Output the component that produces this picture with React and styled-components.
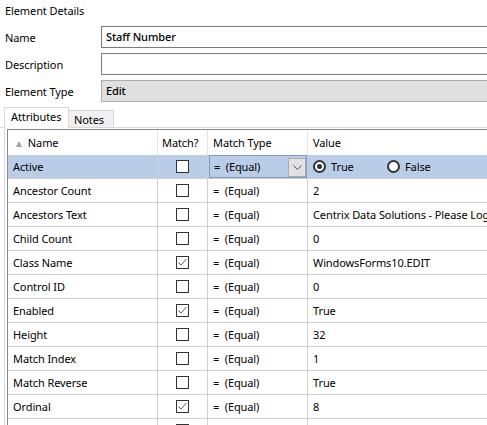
import React from 'react';
import styled, { createGlobalStyle } from 'styled-components';

const Global = createGlobalStyle`
  html, body { margin: 0; padding: 0; background: #fff; }
  body {
    font-family: "Segoe UI", "Noto Sans", "Open Sans", sans-serif;
    font-size: 11px;
    letter-spacing: -0.1px;
    color: #000;
  }
  * { box-sizing: border-box; }
`;

const Page = styled.div`
  width: 487px;
  height: 425px;
  overflow: hidden;
  display: flex;
  flex-direction: column;
`;

const Title = styled.div`
  height: 26px;
  line-height: 22px;
  padding-left: 5px;
`;

const Form = styled.div`
  display: grid;
  grid-template-columns: 101px 1fr;
  grid-auto-rows: 22px;
  row-gap: 5px;
  align-items: center;
`;

const Label = styled.div`
  padding-left: 5px;
`;

const Field = styled.div`
  height: 22px;
  border: 1px solid ${p => (p.$readOnly ? '#adadad' : '#7a7a7a')};
  border-right: none;
  background: ${p => (p.$readOnly ? '#e0e0e0' : '#fff')};
  padding-left: 4px;
  line-height: 19px;
  font-weight: 500;
`;

const TabStrip = styled.div`
  margin-top: 5px;
  height: 21px;
  display: flex;
  align-items: flex-end;
  padding-left: 4px;
  border-bottom: 1px solid #d9d9d9;
`;

const Tab = styled.div`
  height: ${p => (p.$active ? '21px' : '17px')};
  width: ${p => p.$w}px;
  margin-bottom: ${p => (p.$active ? '-1px' : '0')};
  background: ${p => (p.$active ? '#fff' : '#f0f0f0')};
  border: 1px solid #d9d9d9;
  border-bottom: none;
  border-left: ${p => (p.$active ? '1px solid #d9d9d9' : 'none')};
  padding-left: ${p => (p.$active ? '6px' : '5px')};
  line-height: 17px;
  position: relative;
  z-index: 1;
`;

const Panel = styled.div`
  flex: 1;
  margin-left: 4px;
  border-left: 1px solid #d9d9d9;
  padding: 1px 0 0 2px;
  overflow: hidden;
`;

const Grid = styled.div`
  width: 600px;
  border-left: 1px solid #828790;
  border-top: 1px solid #828790;
`;

const Row = styled.div`
  display: grid;
  grid-template-columns: 150px 50px 100px 1fr;
  height: ${p => (p.$header ? '25px' : '24px')};
  border-bottom: ${p => (p.$header ? 'none' : '1px solid #cfcfcf')};
  background: ${p => (p.$selected ? '#b9cde8' : '#fff')};
`;

const Cell = styled.div`
  display: flex;
  align-items: center;
  padding-left: ${p => p.$pad ?? 5}px;
  justify-content: ${p => (p.$center ? 'center' : 'flex-start')};
  border-right: 1px solid ${p => (p.$header ? '#e3e3e3' : '#cfcfcf')};
  white-space: pre;
  overflow: hidden;
  position: relative;
`;

const SortArrow = styled.span`
  color: #a0a0a0;
  font-size: 10px;
  margin-right: 4px;
  margin-left: 1px;
`;

const Box = styled.span`
  width: 13px;
  height: 13px;
  border: 1px solid #333;
  background: #fff;
  display: inline-flex;
  align-items: center;
  justify-content: center;
`;

const Combo = styled.div`
  position: absolute;
  left: 1px;
  top: 0;
  right: 0;
  bottom: 0;
  border: 1px solid #7b9cc9;
  display: flex;
  align-items: center;
  padding-left: 4px;
  white-space: pre;
`;

const ComboButton = styled.span`
  position: absolute;
  right: 0;
  top: 2px;
  width: 18px;
  height: 19px;
  background: #e1e1e1;
  border: 1px solid #adadad;
  display: flex;
  align-items: center;
  justify-content: center;
`;

const RadioGroup = styled.div`
  display: flex;
  align-items: center;
`;

const RadioOption = styled.span`
  display: inline-flex;
  align-items: center;
  min-width: ${p => p.$w || 0}px;
  gap: 5px;
`;

const RadioCircle = styled.span`
  width: 13px;
  height: 13px;
  border-radius: 50%;
  border: 2px solid #333;
  background: #fff;
  display: inline-flex;
  align-items: center;
  justify-content: center;
  &::after {
    content: '';
    width: 5px;
    height: 5px;
    border-radius: 50%;
    background: ${p => (p.$on ? '#333' : 'transparent')};
  }
`;

const Check = () => (
  <svg width="11" height="11" viewBox="0 0 11 11">
    <polyline points="1.5,5.5 4,8 9.5,2" fill="none" stroke="#555" strokeWidth="1" />
  </svg>
);

const Chevron = () => (
  <svg width="9" height="6" viewBox="0 0 9 6">
    <polyline points="0.5,0.5 4.5,4.5 8.5,0.5" fill="none" stroke="#555" strokeWidth="1" />
  </svg>
);

const rows = [
  { name: 'Active', checked: false, value: null, selected: true },
  { name: 'Ancestor Count', checked: false, value: '2' },
  { name: 'Ancestors Text', checked: false, value: 'Centrix Data Solutions - Please Log In' },
  { name: 'Child Count', checked: false, value: '0' },
  { name: 'Class Name', checked: true, value: 'WindowsForms10.EDIT' },
  { name: 'Control ID', checked: false, value: '0' },
  { name: 'Enabled', checked: true, value: 'True' },
  { name: 'Height', checked: false, value: '32' },
  { name: 'Match Index', checked: false, value: '1' },
  { name: 'Match Reverse', checked: false, value: 'True' },
  { name: 'Ordinal', checked: true, value: '8' },
  { name: '', checked: false, value: '', blank: true },
];

export default function App() {
  return (
    <Page>
      <Global />
      <Title>Element Details</Title>
      <Form>
        <Label>Name</Label>
        <Field>Staff Number</Field>
        <Label>Description</Label>
        <Field />
        <Label>Element Type</Label>
        <Field $readOnly>Edit</Field>
      </Form>
      <TabStrip>
        <Tab $active $w={65}>Attributes</Tab>
        <Tab $w={45}>Notes</Tab>
      </TabStrip>
      <Panel>
        <Grid>
          <Row $header>
            <Cell $header $pad={5}><SortArrow>▲</SortArrow>Name</Cell>
            <Cell $header $pad={4}>Match?</Cell>
            <Cell $header $pad={5}>Match Type</Cell>
            <Cell $header $pad={5}>Value</Cell>
          </Row>
          {rows.map((r, i) => (
            <Row key={i} $selected={r.selected}>
              <Cell>{r.name}</Cell>
              <Cell $center $pad={0}>
                <Box>{r.checked && <Check />}</Box>
              </Cell>
              <Cell>
                {r.selected ? (
                  <Combo>
                    {'=  (Equal)'}
                    <ComboButton><Chevron /></ComboButton>
                  </Combo>
                ) : r.blank ? null : (
                  '=  (Equal)'
                )}
              </Cell>
              <Cell>
                {r.value === null ? (
                  <RadioGroup>
                    <RadioOption $w={74}><RadioCircle $on />True</RadioOption>
                    <RadioOption><RadioCircle />False</RadioOption>
                  </RadioGroup>
                ) : (
                  r.value
                )}
              </Cell>
            </Row>
          ))}
        </Grid>
      </Panel>
    </Page>
  );
}
